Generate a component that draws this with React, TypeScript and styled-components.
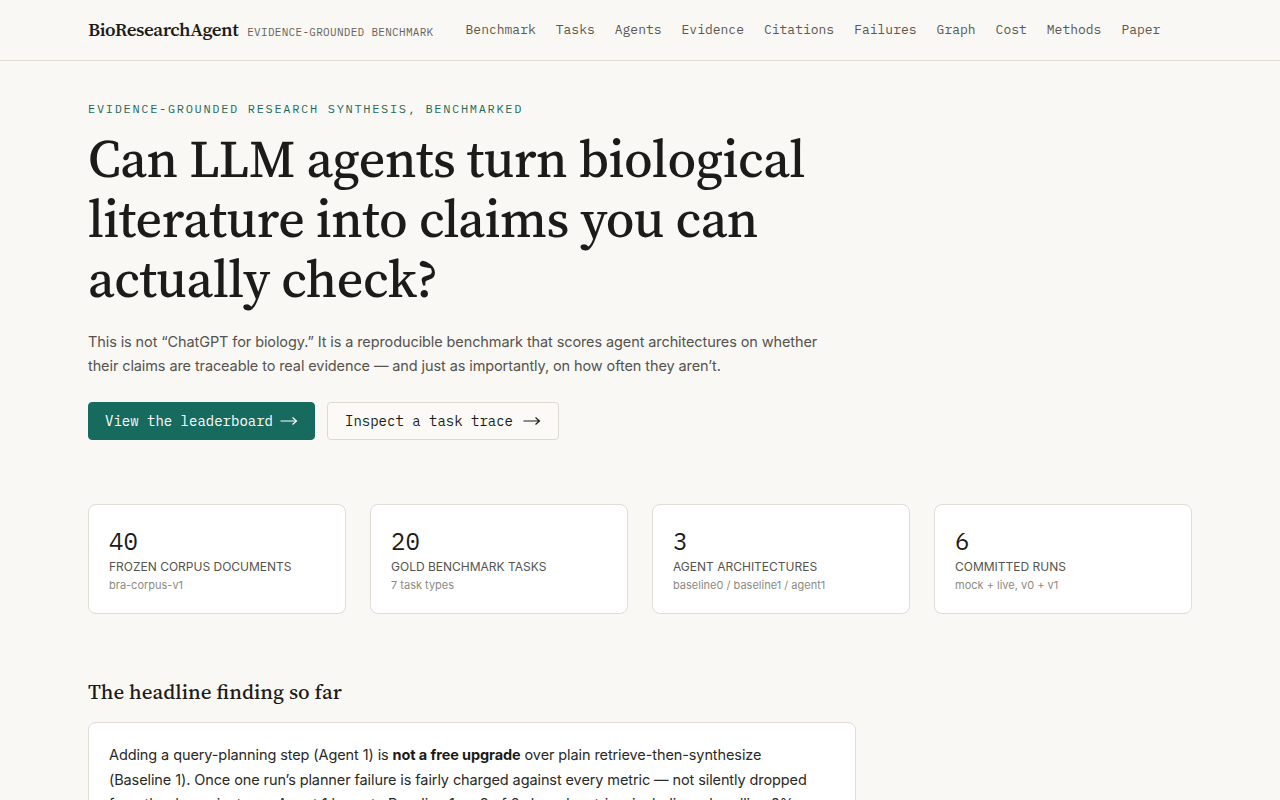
import styled, { createGlobalStyle } from 'styled-components';

const serif = `"Source Serif 4", "Liberation Serif", "DejaVu Serif", serif`;
const mono = `"IBM Plex Mono", "Liberation Mono", "DejaVu Sans Mono", monospace`;
const sans = `Inter, "Noto Sans", "Liberation Sans", sans-serif`;

const GlobalStyle = createGlobalStyle`
  * { box-sizing: border-box; }
  body {
    margin: 0;
    background: #f9f8f4;
    color: #1c1b19;
    font-family: ${sans};
  }
`;

const navItems = ['Benchmark', 'Tasks', 'Agents', 'Evidence', 'Citations', 'Failures', 'Graph', 'Cost', 'Methods', 'Paper'];

const stats = [
  { value: '40', label: 'Frozen corpus documents', sub: 'bra-corpus-v1' },
  { value: '20', label: 'Gold benchmark tasks', sub: '7 task types' },
  { value: '3', label: 'Agent architectures', sub: 'baseline0 / baseline1 / agent1' },
  { value: '6', label: 'Committed runs', sub: 'mock + live, v0 + v1' },
];

const LongArrow: React.FC = () => (
  <ArrowSvg width="18" height="10" viewBox="0 0 18 10" aria-hidden="true">
    <path d="M0.5 5H16.5M12.5 1.5L16.5 5L12.5 8.5" fill="none" stroke="currentColor" strokeWidth="1.2" />
  </ArrowSvg>
);

const App: React.FC = () => {
  return (
    <>
      <GlobalStyle />
      <Header>
        <HeaderInner>
          <Brand>
            <Logo>BioResearchAgent</Logo>
            <Tagline>Evidence-grounded benchmark</Tagline>
          </Brand>
          <Nav>
            {navItems.map(item => (
              <NavLink key={item} href="#">{item}</NavLink>
            ))}
          </Nav>
        </HeaderInner>
      </Header>
      <Main>
        <Hero>
          <Eyebrow>Evidence-grounded research synthesis, benchmarked</Eyebrow>
          <Title>Can LLM agents turn biological literature into claims you can actually check?</Title>
          <Lead>
            This is not “ChatGPT for biology.” It is a reproducible benchmark that scores agent architectures on whether
            their claims are traceable to real evidence — and just as importantly, on how often they aren’t.
          </Lead>
          <Actions>
            <Button $primary>View the leaderboard <LongArrow /></Button>
            <Button>Inspect a task trace <LongArrow /></Button>
          </Actions>
        </Hero>

        <StatGrid>
          {stats.map(stat => (
            <StatCard key={stat.label}>
              <StatValue>{stat.value}</StatValue>
              <StatLabel>{stat.label}</StatLabel>
              <StatSub>{stat.sub}</StatSub>
            </StatCard>
          ))}
        </StatGrid>

        <Section>
          <SectionTitle>The headline finding so far</SectionTitle>
          <FindingCard>
            <p>
              Adding a query-planning step (Agent 1) is <strong>not a free upgrade</strong> over plain retrieve-then-synthesize
              (Baseline 1). Once one run’s planner failure is fairly charged against every metric — not silently dropped
              from the denominator — Agent 1 loses to Baseline 1 on 3 of 6 shared metrics, including a headline 0% vs 0%
              tie on unsupported claims that hides the gap in coverage.
            </p>
          </FindingCard>
        </Section>
      </Main>
    </>
  );
};

export default App;

const Header = styled.header`
  border-bottom: 1px solid #e0ddd5;
`;

const HeaderInner = styled.div`
  max-width: 1152px;
  height: 60px;
  margin: 0 auto;
  padding: 0 24px 2px;
  display: flex;
  align-items: center;
  gap: 32px;
`;

const Brand = styled.div`
  display: flex;
  align-items: baseline;
  gap: 9px;
`;

const Logo = styled.span`
  font-family: ${serif};
  font-size: 19px;
  font-weight: 600;
  letter-spacing: -0.45px;
  color: #1c1b19;
`;

const Tagline = styled.span`
  font-family: ${mono};
  font-size: 11px;
  text-transform: uppercase;
  color: #66645e;
  letter-spacing: 0.3px;
`;

const Nav = styled.nav`
  display: flex;
  gap: 20px;
`;

const NavLink = styled.a`
  font-family: ${mono};
  font-size: 13px;
  color: #5a5852;
  text-decoration: none;
`;

const Main = styled.main`
  max-width: 1152px;
  margin: 0 auto;
  padding: 0 24px;
`;

const Hero = styled.section`
  padding-top: 40px;
  max-width: 760px;
`;

const Eyebrow = styled.div`
  font-family: ${mono};
  font-size: 12px;
  letter-spacing: 0.14em;
  text-transform: uppercase;
  color: #1f6b5b;
  line-height: 16px;
`;

const Title = styled.h1`
  margin: 12px 0 0;
  font-family: ${serif};
  font-weight: 500;
  font-size: 52px;
  line-height: 60px;
  letter-spacing: -0.4px;
  color: #1c1b19;
`;

const Lead = styled.p`
  margin: 21px 0 0;
  width: 745px;
  font-size: 14.5px;
  letter-spacing: -0.1px;
  line-height: 24px;
  color: #55534e;
`;

const Actions = styled.div`
  display: flex;
  gap: 12px;
  margin-top: 24px;
`;

const ArrowSvg = styled.svg`
  display: block;
  margin-left: 7px;
`;

const Button = styled.button<{ $primary?: boolean }>`
  display: flex;
  align-items: center;
  height: 38px;
  padding: 0 ${({ $primary }) => ($primary ? '16px' : '17px')};
  border-radius: 4px;
  font-family: ${mono};
  font-size: 14px;
  cursor: pointer;
  border: 1px solid ${({ $primary }) => ($primary ? '#176b5e' : '#dedad2')};
  background: ${({ $primary }) => ($primary ? '#176b5e' : '#fbfaf7')};
  color: ${({ $primary }) => ($primary ? '#ffffff' : '#1c1b19')};

  ${ArrowSvg} {
    margin-left: ${({ $primary }) => ($primary ? '7px' : '10px')};
  }
`;

const StatGrid = styled.section`
  display: grid;
  grid-template-columns: repeat(4, 1fr);
  gap: 24px;
  margin-top: 64px;
`;

const StatCard = styled.div`
  background: #ffffff;
  border: 1px solid #e0ddd5;
  border-radius: 8px;
  height: 110px;
  padding: 22px 20px 0;
`;

const StatValue = styled.div`
  font-family: ${mono};
  font-size: 24px;
  line-height: 28px;
  color: #1c1b19;
`;

const StatLabel = styled.div`
  margin-top: 4px;
  font-size: 12px;
  text-transform: uppercase;
  color: #55534e;
  line-height: 16px;
`;

const StatSub = styled.div`
  margin-top: 3px;
  font-size: 11px;
  color: #8c8a84;
  line-height: 14px;
`;

const Section = styled.section`
  margin-top: 64px;
`;

const SectionTitle = styled.h2`
  margin: 0;
  font-family: ${serif};
  font-weight: 500;
  font-size: 21px;
  line-height: 28px;
  color: #1c1b19;
`;

const FindingCard = styled.div`
  margin-top: 16px;
  width: 768px;
  background: #ffffff;
  border: 1px solid #e0ddd5;
  border-radius: 8px;
  padding: 20px 20px;

  p {
    margin: 0;
    max-width: 712px;
    font-size: 14.5px;
    letter-spacing: -0.1px;
    line-height: 24.5px;
    color: #2a2925;
  }

  strong {
    font-weight: 700;
    color: #1c1b19;
  }
`;
